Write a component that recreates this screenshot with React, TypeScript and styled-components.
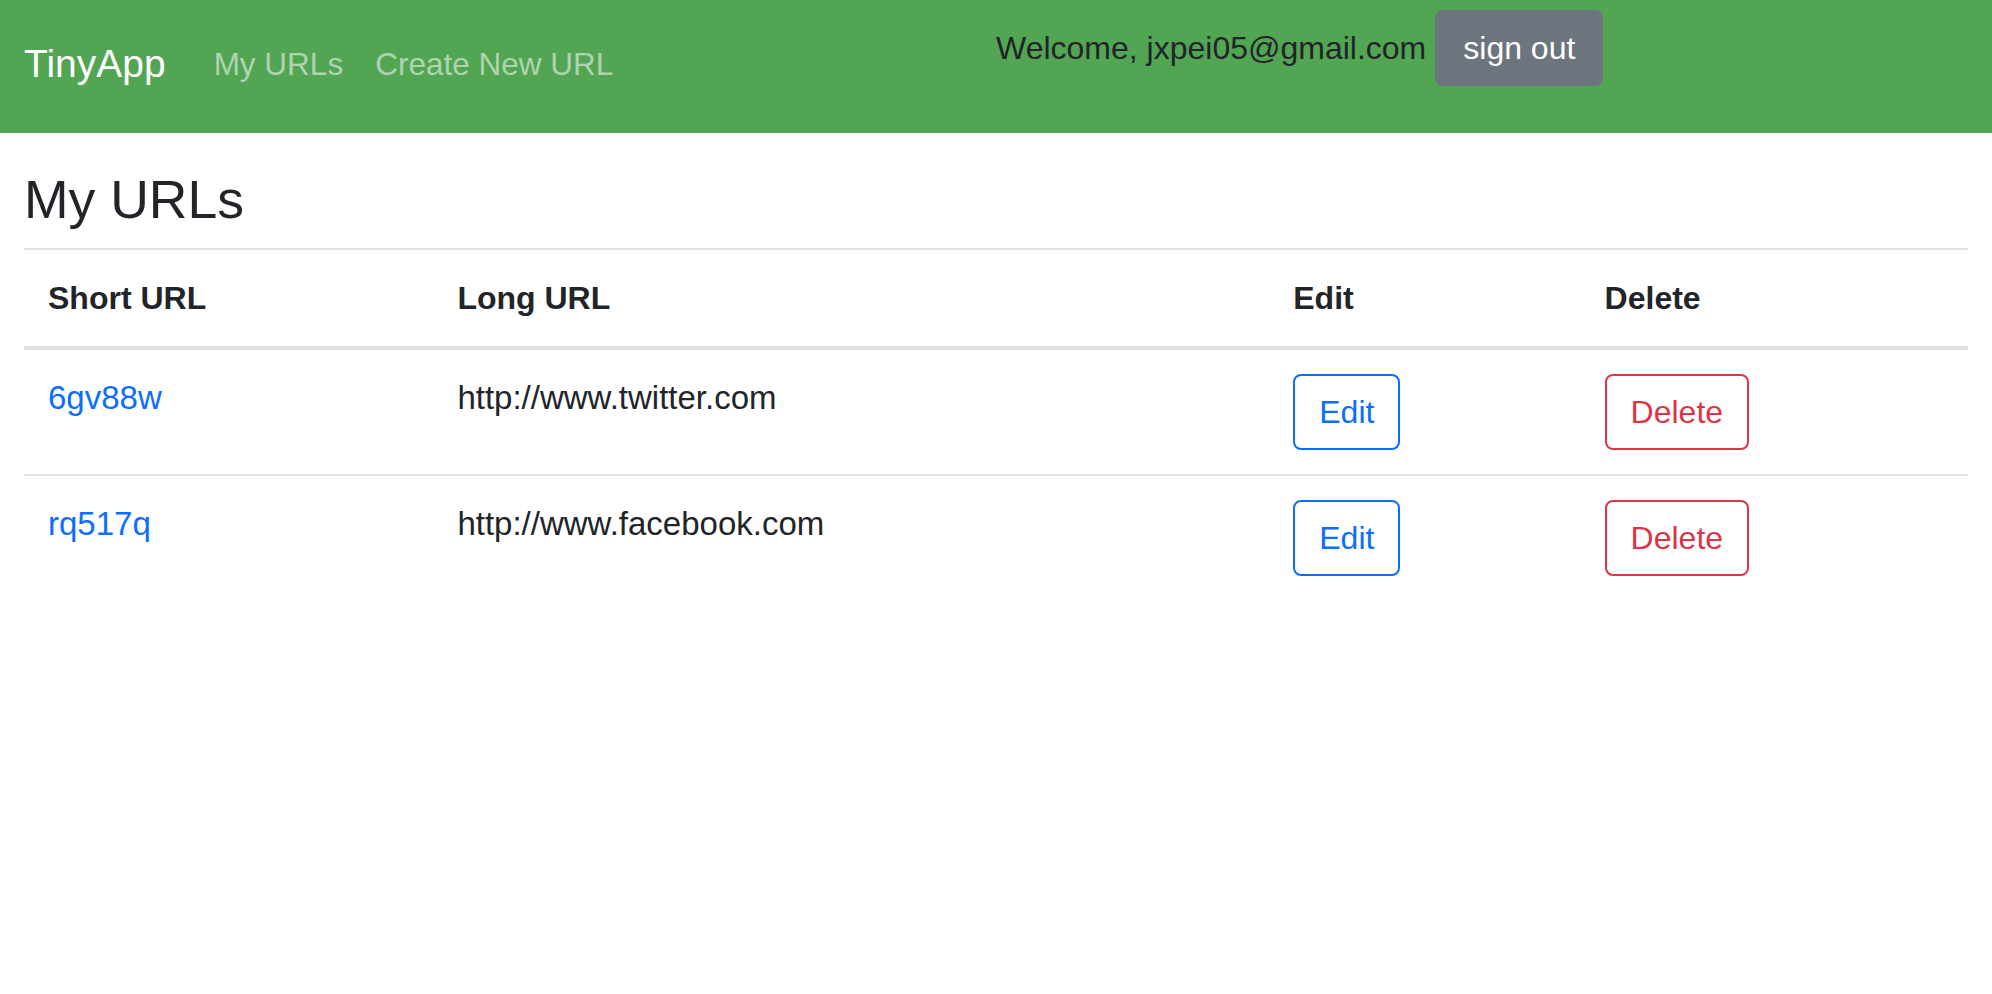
import styled, { createGlobalStyle } from 'styled-components'

const GlobalStyle = createGlobalStyle`
  html, body {
    margin: 0;
    padding: 0;
    background: #fff;
    font-family: "Liberation Sans", Arial, Helvetica, sans-serif;
    color: #212529;
  }
`

const URLS = [
  { short: '6gv88w', long: 'http://www.twitter.com' },
  { short: 'rq517q', long: 'http://www.facebook.com' },
]

const COLUMNS = [
  { label: 'Short URL', width: 409 },
  { label: 'Long URL', width: 835 },
  { label: 'Edit', width: 311 },
  { label: 'Delete', width: 387 },
]

const Navbar = styled.nav`
  display: grid;
  grid-template-columns: 1fr 1fr;
  align-items: start;
  height: 133px;
  padding: 0 24px;
  background-color: #52a552;
  box-sizing: border-box;
`

const NavLeft = styled.div`
  display: flex;
  align-items: center;
  padding-top: 34px;
  line-height: 60px;
`

const Brand = styled.a`
  font-size: 39px;
  color: #fff;
  text-decoration: none;
  margin-right: 32px;
`

const NavLink = styled.a`
  font-size: 31.5px;
  color: rgba(255, 255, 255, 0.55);
  text-decoration: none;
  padding: 0 16px;
`

const NavRight = styled.div`
  display: flex;
  align-items: center;
  gap: 9px;
  padding-top: 10px;
`

const Welcome = styled.span`
  font-size: 32px;
  line-height: 48px;
  color: #212529;
`

const Button = styled.button<{ $tone: 'primary' | 'danger' | 'secondary' }>`
  display: inline-block;
  vertical-align: top;
  padding: 12px ${({ $tone }) => ($tone === 'secondary' ? '26px' : '24px')};
  font-family: inherit;
  font-size: 32px;
  line-height: 48px;
  border-radius: 8px;
  border: 2px solid
    ${({ $tone }) => ($tone === 'primary' ? '#0d6efd' : $tone === 'danger' ? '#dc3545' : '#6c757d')};
  background-color: ${({ $tone }) => ($tone === 'secondary' ? '#6c757d' : 'transparent')};
  color: ${({ $tone }) => ($tone === 'primary' ? '#0d6efd' : $tone === 'danger' ? '#dc3545' : '#fff')};
  cursor: pointer;
`

const Main = styled.main`
  padding: 35px 24px 0;
`

const Title = styled.h3`
  margin: 0 0 16px;
  font-size: 53.5px;
  font-weight: 500;
  line-height: 64px;
  color: #212529;
`

const Table = styled.table`
  width: 100%;
  table-layout: fixed;
  border-collapse: separate;
  border-spacing: 0;
  color: #212529;
`

const HeadCell = styled.th<{ $w: number }>`
  box-sizing: border-box;
  width: ${({ $w }) => $w}px;
  padding: 24px;
  text-align: left;
  vertical-align: bottom;
  font-size: 32px;
  font-weight: 700;
  line-height: 48px;
  border-top: 2px solid #dee2e6;
  border-bottom: 4px solid #dee2e6;
`

const Row = styled.tr`
  & + & > td {
    border-top: 2px solid #dee2e6;
  }
`

const Cell = styled.td`
  padding: 24px;
  vertical-align: top;
  font-size: 33px;
  line-height: 48px;
`

const ShortLink = styled.a`
  color: #0d6efd;
  text-decoration: none;
`

export default function App() {
  return (
    <>
      <GlobalStyle />
      <Navbar>
        <NavLeft>
          <Brand href="#">TinyApp</Brand>
          <NavLink href="#">My URLs</NavLink>
          <NavLink href="#">Create New URL</NavLink>
        </NavLeft>
        <NavRight>
          <Welcome>Welcome, jxpei05@gmail.com</Welcome>
          <Button $tone="secondary">sign out</Button>
        </NavRight>
      </Navbar>
      <Main>
        <Title>My URLs</Title>
        <Table>
          <thead>
            <tr>
              {COLUMNS.map((c) => (
                <HeadCell key={c.label} $w={c.width}>
                  {c.label}
                </HeadCell>
              ))}
            </tr>
          </thead>
          <tbody>
            {URLS.map((u) => (
              <Row key={u.short}>
                <Cell>
                  <ShortLink href="#">{u.short}</ShortLink>
                </Cell>
                <Cell>{u.long}</Cell>
                <Cell>
                  <Button $tone="primary">Edit</Button>
                </Cell>
                <Cell>
                  <Button $tone="danger">Delete</Button>
                </Cell>
              </Row>
            ))}
          </tbody>
        </Table>
      </Main>
    </>
  )
}
